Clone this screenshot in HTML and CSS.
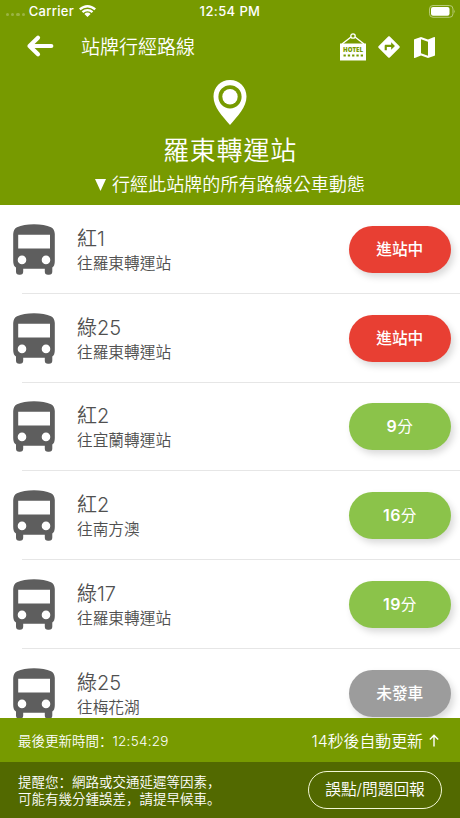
FILE: index.html
```html
<!DOCTYPE html>
<html lang="zh-Hant">
<head>
<meta charset="utf-8">
<title>站牌行經路線</title>
<link rel="stylesheet" href="styles.css">
</head>
<body>
<svg class="defs" aria-hidden="true">
  <symbol id="bus" viewBox="0 0 42 51">
    <path fill-rule="evenodd" d="M4 3.200Q10.500 .2 21 .2T38 3.200Q41.500 5 41.800 10V37Q41.800 42 39.300 43.500V47.500Q39.300 50.700 36 50.700H35Q31.800 50.700 31.800 47.500V44.700H10.200V47.500Q10.200 50.700 7 50.700H6.200Q3 50.700 3 47.500V43.500Q.2 42 .2 37V10Q.5 5 4 3.200ZM5.200 10.800V24.600H37V10.800ZM9 31.600A4.300 4.300 0 1 0 9 40.200A4.300 4.300 0 1 0 9 31.600ZM33 31.600A4.300 4.300 0 1 0 33 40.200A4.300 4.300 0 1 0 33 31.600Z"/>
  </symbol>
</svg>
<div class="app">
  <header class="top">
    <div class="status">
      <div class="carrier">
        <span class="dots"><i></i><i></i><i></i><i></i></span>
        <span>Carrier</span>
        <svg class="wifi" viewBox="0 0 17 12"><path fill="#fff" d="M8.500 0Q13 0 17 3.500L15.400 5.200Q12.400 2.500 8.500 2.500T1.600 5.200L0 3.500Q4 0 8.500 0ZM8.500 3.900Q11.700 3.900 14.300 6.200L12.700 7.900Q10.900 6.300 8.500 6.300T4.300 7.900L2.700 6.200Q5.300 3.900 8.500 3.900ZM8.500 7.600Q10.300 7.600 11.600 8.900L8.500 12L5.400 8.900Q6.700 7.600 8.500 7.600Z"/></svg>
      </div>
      <div class="clock">12:54 PM</div>
      <svg class="battery" viewBox="0 0 27 13"><rect x=".5" y=".5" width="23.500" height="11.800" rx="3.500" fill="none" stroke="#b8cb78"/><rect x="2" y="2" width="18.500" height="8.800" rx="2" fill="#fff"/><path d="M25.200 4.500Q26.700 6.400 25.200 8.300Z" fill="#b8cb78"/></svg>
    </div>
    <nav class="nav">
      <svg class="back" viewBox="0 0 28 24"><path d="M25.300 12H3.500M12 3.700L3.500 12L12 20.300" fill="none" stroke="#fff" stroke-width="4.200" stroke-linecap="round" stroke-linejoin="round"/></svg>
      <h1>站牌行經路線</h1>
      <div class="tools">
        <svg class="hotel" viewBox="0 0 26 28"><path d="M2 11L11 4M24 11L15 4" stroke="#fff" stroke-width="1.400"/><circle cx="13" cy="3" r="2.200" fill="none" stroke="#fff" stroke-width="1.300"/><path d="M0 10.500H26V27.500H0Z" fill="#fff"/><text x="13" y="18.900" text-anchor="middle" textLength="20" lengthAdjust="spacingAndGlyphs">HOTEL</text><path d="M3.500 22.600H23" stroke="#779a00" stroke-width="2" stroke-dasharray="2.300 2"/></svg>
        <svg class="direction" viewBox="0 0 24 24"><path fill="#fff" d="M21.710 11.290l-9-9c-.390-.390-1.020-.390-1.410 0l-9 9c-.390.390-.390 1.020 0 1.410l9 9c.390.390 1.020.390 1.410 0l9-9c.390-.380.390-1.010 0-1.410zM14 14.500V12h-4v3H8v-4c0-.550.450-1 1-1h5V7.500l3.500 3.500-3.500 3.500z"/></svg>
        <svg class="map" viewBox="3 3 18 18"><path fill="#fff" d="M20.500 3l-.160.030L15 5.100 9 3 3.360 4.900c-.210.070-.360.250-.360.480V20.500c0 .280.220.500.500.500l.160-.030L9 18.900l6 2.100 5.640-1.900c.210-.070.360-.250.360-.480V3.500c0-.280-.220-.500-.500-.500zM15 19l-6-2.110V5l6 2.110V19z"/></svg>
      </div>
    </nav>
    <section class="station">
      <svg class="pin" viewBox="0 0 34 45"><path fill="#fff" fill-rule="evenodd" d="M17 0C7.500 0 .5 7.300.5 16.500C.5 27.500 9.500 36 17 45C24.500 36 33.500 27.500 33.500 16.500C33.500 7.300 26.500 0 17 0ZM17 5.200A11.600 11.600 0 1 1 17 28.400A11.600 11.600 0 1 1 17 5.200Z"/><circle cx="17" cy="16.800" r="7.700" fill="#fff"/></svg>
      <h2>羅東轉運站</h2>
      <p><svg class="triangle" viewBox="0 0 11 12"><path d="M0 0H11L5.500 12Z" fill="#fff"/></svg><span>行經此站牌的所有路線公車動態</span></p>
    </section>
  </header>
  <main class="routes">
    <article class="route"><svg class="bus"><use href="#bus"/></svg><div class="info"><h3>紅1</h3><p>往羅東轉運站</p></div><span class="pill arriving">進站中</span></article>
    <article class="route"><svg class="bus"><use href="#bus"/></svg><div class="info"><h3>綠25</h3><p>往羅東轉運站</p></div><span class="pill arriving">進站中</span></article>
    <article class="route"><svg class="bus"><use href="#bus"/></svg><div class="info"><h3>紅2</h3><p>往宜蘭轉運站</p></div><span class="pill minutes"><b>9</b>分</span></article>
    <article class="route"><svg class="bus"><use href="#bus"/></svg><div class="info"><h3>紅2</h3><p>往南方澳</p></div><span class="pill minutes"><b>16</b>分</span></article>
    <article class="route"><svg class="bus"><use href="#bus"/></svg><div class="info"><h3>綠17</h3><p>往羅東轉運站</p></div><span class="pill minutes"><b>19</b>分</span></article>
    <article class="route"><svg class="bus"><use href="#bus"/></svg><div class="info"><h3>綠25</h3><p>往梅花湖</p></div><span class="pill idle">未發車</span></article>
  </main>
  <footer>
    <div class="refresh">
      <span class="updated">最後更新時間<span class="punct" lang="zh-Hans">：</span><span class="time">12:54:29</span></span>
      <span class="countdown">14秒後自動更新 <svg class="up" viewBox="0 0 10 13"><path d="M5 12.500V1.200M.8 5.400L5 1.200L9.200 5.400" fill="none" stroke="#fff" stroke-width="1.400"/></svg></span>
    </div>
    <div class="notice">
      <p lang="zh-Hant">提醒您<span class="punct" lang="zh-Hans">：</span>網路或交通延遲等因素<span class="punct" lang="zh-Hans">，</span><br>可能有幾分鍾誤差<span class="punct" lang="zh-Hans">，</span>請提早候車<span class="punct" lang="zh-Hans">。</span></p>
      <button>誤點/問題回報</button>
    </div>
  </footer>
</div>
</body>
</html>
```
FILE: styles.css
```css
* { box-sizing: border-box; margin: 0; padding: 0; }
body { width: 460px; height: 818px; overflow: hidden; background: #fff; font-family: Inter, "Noto Sans CJK TC", sans-serif; color: #505050; }
svg { display: block; flex: none; }
.defs { display: none; }
h1, h2, h3 { font-weight: 350; white-space: nowrap; }
.app { height: 818px; display: flex; flex-direction: column; }
.top { height: 205px; flex: none; background: #779a00; color: #fff; }
.status { height: 22px; display: grid; grid-template-columns: 1fr auto 1fr; align-items: center; font-size: 13px; line-height: 22px; padding: 0 6px 0 6px; }
.carrier { display: flex; align-items: center; gap: 4px; letter-spacing: .3px; }
.dots { display: flex; gap: 2px; padding-top: 7px; }
.dots i { width: 3.200px; height: 3.200px; border-radius: 50%; background: #9bb444; }
.carrier, .clock { font-weight: 450; }
.wifi { width: 17px; height: 12px; margin-left: 1px; }
.clock { letter-spacing: .4px; }
.battery { width: 27px; height: 13px; justify-self: end; margin-right: -2px; }
.nav { height: 50px; display: flex; align-items: center; padding: 0 25px 0 26px; }
.back { width: 28px; height: 24px; margin-top: -3px; }
.nav h1 { font-size: 19px; line-height: 24px; margin: 2px 0 0 27px; }
.tools { display: flex; align-items: center; margin-left: auto; }
.hotel { width: 26px; height: 28px; margin-right: 10px; }
.hotel text { font: 800 6px "Open Sans", sans-serif; fill: #779a00; }
.direction { width: 26px; height: 26px; margin-right: 12px; }
.map { width: 21px; height: 21px; }
.station { display: flex; flex-direction: column; align-items: center; padding-top: 8px; }
.pin { width: 34px; height: 45px; }
.station h2 { font-size: 26px; line-height: 34px; letter-spacing: .8px; margin-top: 9px; }
.station p { display: flex; align-items: center; gap: 6px; height: 24px; margin-top: 5px; font-size: 18px; line-height: 24px; font-weight: 350; letter-spacing: .08px; }
.triangle { width: 11px; height: 12px; }
.routes { flex: 1; min-height: 0; overflow: hidden; }
.route { height: 88.800px; display: flex; align-items: center; padding: 0 9px 0 13px; background: linear-gradient(#e6e6e6, #e6e6e6) 22px 100% / 100% 1px no-repeat; }
.bus { width: 42px; height: 51px; fill: #5e5e5e; }
.info { flex: 1; margin-left: 22px; padding-top: 3px; }
.info h3 { font-size: 20px; line-height: 26px; }
.info p { font-size: 15.700px; line-height: 24px; font-weight: 350; }
.pill { width: 102.500px; height: 47px; border-radius: 24px; color: #fff; font-size: 15.700px; line-height: 47px; text-align: center; font-weight: 400; box-shadow: 3px 4px 7px rgba(0,0,0,.15); }
.pill b { font-weight: 600; font-size: 16px; letter-spacing: .4px; }
.arriving, .idle { font-weight: 500; }
.arriving { background: #e83f33; }
.minutes { background: #8bc34a; }
.idle { background: #9c9c9c; }
footer { flex: none; color: #fff; }
.punct { font-family: "Noto Sans CJK SC", sans-serif; }
.refresh { height: 44px; background: #779a00; display: flex; align-items: center; justify-content: space-between; padding: 0 21px 0 18px; }
.updated { font-size: 13.500px; line-height: 20px; font-weight: 350; }
.time { letter-spacing: .25px; }
.countdown { display: flex; align-items: center; gap: 6px; font-size: 15.900px; font-weight: 350; }
.up { width: 10px; height: 13px; }
.notice { height: 56px; background: #526900; display: flex; align-items: center; justify-content: space-between; padding: 0 18px; white-space: nowrap; }
.notice p { font-size: 13.500px; line-height: 16px; font-weight: 350; }
.notice button { width: 134px; height: 38px; border: 1px solid #f2f7d5; border-radius: 19px; background: none; color: #fff; font: 350 15.700px/34px Inter, "Noto Sans CJK TC", sans-serif; }
```
